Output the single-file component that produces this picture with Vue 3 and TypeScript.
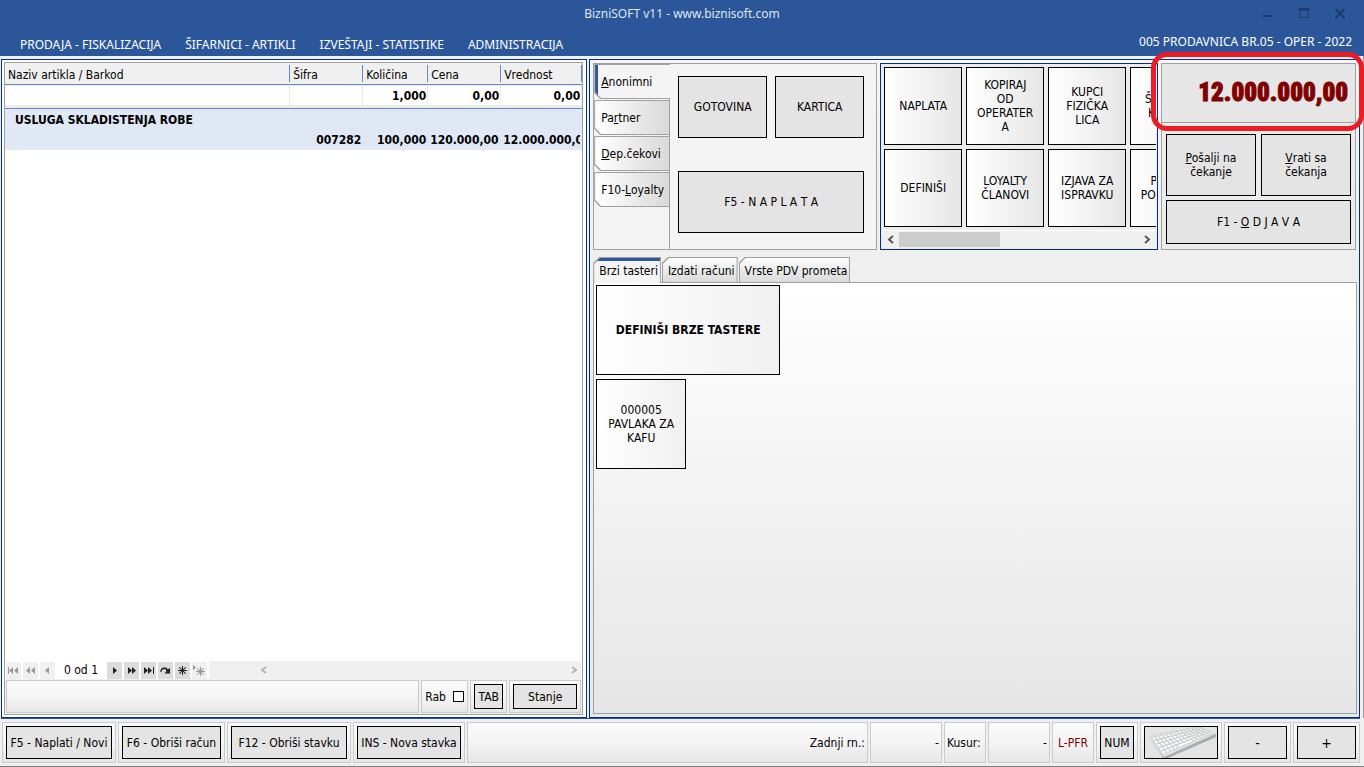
<script setup lang="ts">
import { computed, ref } from 'vue'

interface Stavka {
  naziv: string
  sifra: string
  kolicina: string
  cena: string
  vrednost: string
}

const meni = ['PRODAJA - FISKALIZACIJA', 'ŠIFARNICI - ARTIKLI', 'IZVEŠTAJI - STATISTIKE', 'ADMINISTRACIJA']

const stavke: Stavka[] = [
  { naziv: 'USLUGA SKLADISTENJA ROBE', sifra: '007282', kolicina: '100,000', cena: '120.000,00', vrednost: '12.000.000,00' },
]

const unos = ref({ naziv: '', sifra: '', kolicina: '1,000', cena: '0,00', vrednost: '0,00' })

const kupci = [
  { pre: '', key: 'A', post: 'nonimni' },
  { pre: 'Pa', key: 'r', post: 'tner' },
  { pre: '', key: 'D', post: 'ep.čekovi' },
  { pre: 'F10-', key: 'L', post: 'oyalty' },
]
const kupac = ref(0)

const funkcije = [
  ['NAPLATA'],
  ['KOPIRAJ', 'OD', 'OPERATER', 'A'],
  ['KUPCI', 'FIZIČKA', 'LICA'],
  ['ŠIFARNIK', 'KUPACA'],
  ['DEFINIŠI'],
  ['LOYALTY', 'ČLANOVI'],
  ['IZJAVA ZA', 'ISPRAVKU'],
  ['PREPIS', 'PODATAKA'],
]

const kartice = ['Brzi tasteri', 'Izdati računi', 'Vrste PDV prometa']
const kartica = ref(0)
const rabat = ref(false)

const navigacija = [
  { ime: 'Prvi', on: false, d: 'M2 4h1v7h-1z M7 4v7l-4-3.5z M12 4v7l-4-3.5z' },
  { ime: 'Strana nazad', on: false, d: 'M7 4v7l-4-3.5z M12 4v7l-4-3.5z' },
  { ime: 'Prethodni', on: false, d: 'M9 4v7l-4-3.5z' },
]
const navigacijaDesno = [
  { ime: 'Sledeći', on: true, d: 'M6 4v7l4-3.5z' },
  { ime: 'Strana napred', on: true, d: 'M4 4v7l4-3.5z M8 4v7l4-3.5z' },
  { ime: 'Poslednji', on: true, d: 'M3 4v7l4-3.5z M7 4v7l4-3.5z M12 4h1v7h-1z' },
  { ime: 'Osveži', on: true, d: 'M2 8.500L3 6l2-1.500h3L10 6.300 12 5v5.500H6.500L8.500 8 7.500 6.200H5.200L3.800 7.300 3.500 9z' },
  { ime: 'Novi', on: true, d: 'M7 3h1v3.300L10.300 4l.7.700L8.700 7H12v1H8.700L11 10.300l-.7.700L8 8.700V12H7V8.700L4.700 11l-.7-.7L6.300 8H3V7h3.300L4 4.700l.7-.7L7 6.300z' },
  { ime: 'Filter', on: false, d: 'M1 2v5l3-2.500z M8 4h1v3.300L11.300 5l.7.700L9.700 8H13v1H9.700L12 11.300l-.7.700L9 9.700V13H8V9.700L5.700 12l-.7-.7L7.300 9H4V8h3.300L5 5.700l.7-.7L8 7.300z' },
]

const komande = ['F5 - Naplati / Novi', 'F6 - Obriši račun', 'F12 - Obriši stavku', 'INS - Nova stavka']

// Keys are laid out on a skewed quadrilateral by bilinear interpolation.
const uglovi = { tl: [5, 10], tr: [54, 0], br: [69, 6], bl: [18, 29] }
function tacka(u: number, v: number): string {
  return [0, 1]
    .map((i) => {
      const gore = uglovi.tl[i] * (1 - u) + uglovi.tr[i] * u
      const dole = uglovi.bl[i] * (1 - u) + uglovi.br[i] * u
      return (gore * (1 - v) + dole * v).toFixed(2)
    })
    .join(',')
}
const dirke = computed(() => {
  const out: string[] = []
  for (let r = 0; r < 5; r++) {
    for (let c = 0; c < 13; c++) {
      if (r === 4 && c > 3 && c < 8) continue
      const u0 = (c + 0.3) / 13.3
      const u1 = u0 + 0.062
      const v0 = 0.04 + r * 0.185
      const v1 = v0 + 0.15
      out.push([tacka(u0, v0), tacka(u1, v0), tacka(u1, v1), tacka(u0, v1)].join(' '))
    }
  }
  out.push([tacka(0.33, 0.78), tacka(0.61, 0.78), tacka(0.61, 0.93), tacka(0.33, 0.93)].join(' '))
  return out
})
</script>

<template>
  <div class="app">
    <header class="top">
      <div class="titlebar">
        <h1>BizniSOFT v11 - www.biznisoft.com</h1>
        <div class="winbtns">
          <button type="button" aria-label="Umanji"><svg width="12" height="12"><path d="M1 8h9" stroke-width="2" /></svg></button>
          <button type="button" aria-label="Uvećaj"><svg width="12" height="12"><path d="M1.500 1v8.500h9V1" stroke-width="1" /><path d="M1 1.500h10" stroke-width="3" /></svg></button>
          <button type="button" aria-label="Zatvori"><svg width="12" height="12"><path d="M1.500 1l9 9M10.500 1l-9 9" stroke-width="2" /></svg></button>
        </div>
      </div>
      <div class="menubar">
        <nav>
          <a v-for="m in meni" :key="m" href="#">{{ m }}</a>
        </nav>
        <span class="user">005 PRODAVNICA BR.05 - OPER - 2022</span>
      </div>
    </header>

    <main class="work">
      <section class="frame left">
        <div class="grid-box">
          <table class="items">
            <colgroup>
              <col />
              <col class="c-sifra" />
              <col class="c-kol" />
              <col class="c-cena" />
              <col class="c-vred" />
            </colgroup>
            <thead>
              <tr class="head">
                <th>Naziv artikla / Barkod</th>
                <th>Šifra</th>
                <th>Količina</th>
                <th>Cena</th>
                <th>Vrednost</th>
              </tr>
              <tr class="entry">
                <td><input v-model="unos.naziv" aria-label="Naziv artikla / Barkod" /></td>
                <td><input v-model="unos.sifra" aria-label="Šifra" /></td>
                <td><input v-model="unos.kolicina" aria-label="Količina" /></td>
                <td><input v-model="unos.cena" aria-label="Cena" /></td>
                <td><input v-model="unos.vrednost" aria-label="Vrednost" /></td>
              </tr>
            </thead>
            <tbody v-for="s in stavke" :key="s.sifra">
              <tr class="name"><td colspan="5">{{ s.naziv }}</td></tr>
              <tr class="vals">
                <td></td>
                <td>{{ s.sifra }}</td>
                <td>{{ s.kolicina }}</td>
                <td class="cut">{{ s.cena }}</td>
                <td class="cut">{{ s.vrednost }}</td>
              </tr>
            </tbody>
          </table>
          <div class="blank"></div>
          <div class="navrow">
            <button v-for="n in navigacija" :key="n.ime" type="button" class="nav" :class="{ on: n.on }" :aria-label="n.ime">
              <svg width="15" height="15"><path :d="n.d" /></svg>
            </button>
            <span class="pos">0 od 1</span>
            <button v-for="n in navigacijaDesno" :key="n.ime" type="button" class="nav" :class="{ on: n.on }" :aria-label="n.ime">
              <svg width="15" height="15"><path :d="n.d" /></svg>
            </button>
            <div class="navgap"></div>
            <div class="hscroll">
              <svg width="8" height="8"><path d="M6 1L2 4l4 3" /></svg>
              <svg width="8" height="8"><path d="M2 1l4 3-4 3" /></svg>
            </div>
          </div>
          <div class="subbar">
            <div class="cell grow"></div>
            <div class="cell rab"><label for="rab">Rab</label><input id="rab" v-model="rabat" type="checkbox" /></div>
            <div class="cell"><button type="button" class="btn tab-btn">TAB</button></div>
            <div class="cell"><button type="button" class="btn stanje">Stanje</button></div>
          </div>
        </div>
      </section>

      <section class="frame right">
        <div class="upper">
          <div class="pay">
            <div class="vtabs">
              <button v-for="(k, i) in kupci" :key="k.post" type="button" class="vtab" :class="{ active: kupac === i }" @click="kupac = i">
                <span>{{ k.pre }}<u>{{ k.key }}</u>{{ k.post }}</span>
              </button>
            </div>
            <div class="paybtns">
              <button type="button" class="btn">GOTOVINA</button>
              <button type="button" class="btn">KARTICA</button>
              <button type="button" class="btn wide">F5 - N A P L A T A</button>
            </div>
          </div>

          <div class="funcs">
            <div class="fgrid">
              <button v-for="f in funkcije" :key="f[0]" type="button" class="btn tile">
                <span v-for="r in f" :key="r">{{ r }}</span>
              </button>
            </div>
            <div class="scroll">
              <svg width="8" height="9"><path d="M6 1L2 4.500 6 8" /></svg>
              <div class="track"><div class="thumb"></div></div>
              <svg width="8" height="9"><path d="M2 1l4 3.500L2 8" /></svg>
            </div>
          </div>

          <div class="summary">
            <div class="total">
              <output>12.000.000,00</output>
              <div class="marker"></div>
            </div>
            <div class="hold">
              <button type="button" class="btn"><span><u>P</u>ošalji na<br />čekanje</span></button>
              <button type="button" class="btn"><span><u>V</u>rati sa<br />čekanja</span></button>
              <button type="button" class="btn logout"><span>F1 - <u>O</u> D J A V A</span></button>
            </div>
          </div>
        </div>

        <div class="htabs">
          <button v-for="(k, i) in kartice" :key="k" type="button" class="htab" :class="{ active: kartica === i }" @click="kartica = i">
            <span>{{ k }}</span>
          </button>
        </div>
        <div class="quick">
          <button type="button" class="btn soft define">DEFINIŠI BRZE TASTERE</button>
          <button type="button" class="btn soft item"><span>000005</span><span>PAVLAKA ZA</span><span>KAFU</span></button>
        </div>
      </section>
    </main>

    <footer class="bottom">
      <div v-for="(k, i) in komande" :key="k" class="cell" :class="'k' + i"><button type="button" class="btn">{{ k }}</button></div>
      <div class="cell grow end">Zadnji rn.:</div>
      <div class="cell end w72">-</div>
      <div class="cell w42 kusur">Kusur:</div>
      <div class="cell end w62">-</div>
      <div class="cell lpfr w42">L-PFR</div>
      <div class="cell w42"><button type="button" class="btn">NUM</button></div>
      <div class="cell w82">
        <button type="button" class="btn kb" aria-label="Tastatura">
          <svg width="72" height="31" viewBox="0 0 72 31">
            <polygon points="8,15 18,31 23,31 71,10 71,7" fill="#7f8585" opacity="0.6" />
            <polygon points="3,9 17,29 19,31 70,8 70,6 55,0 50,0" fill="#adb4b5" />
            <polygon points="3,9 17,28 19,30 70,7 69,5 54,0 50,0" fill="#dde1e2" />
            <polygon v-for="d in dirke" :key="d" :points="d" fill="#ffffff" stroke="#a3abac" stroke-width="0.4" />
          </svg>
        </button>
      </div>
      <div class="cell w67"><button type="button" class="btn sign">-</button></div>
      <div class="cell w67"><button type="button" class="btn sign">+</button></div>
    </footer>
  </div>
</template>

<style>
body {
  margin: 0;
  overflow: hidden;
}
</style>

<style scoped>
.app,
.app * {
  box-sizing: border-box;
}
.app {
  height: 100vh;
  display: flex;
  flex-direction: column;
  background: #f0f0f0;
  border-bottom: 1px solid #808080;
  font-family: "DejaVu Sans Condensed", "Noto Sans", sans-serif;
  font-size: 12px;
  line-height: 14px;
  color: #000;
}
button,
input {
  font: inherit;
  color: inherit;
  margin: 0;
}
button {
  padding: 0;
  border: 0;
  background: none;
}

/* header */
.top {
  height: 56px;
  flex: none;
  background: #2b579a;
  color: #fff;
  font-family: "Noto Sans", sans-serif;
}
.titlebar {
  position: relative;
  height: 28px;
  display: flex;
  align-items: center;
  justify-content: center;
}
h1 {
  margin: 0;
  font-size: 12px;
  font-weight: 400;
  color: #dfe6f1;
}
.winbtns {
  position: absolute;
  right: 18px;
  top: 8px;
  display: flex;
  gap: 24px;
}
.winbtns button {
  height: 12px;
  display: flex;
}
.winbtns path {
  fill: none;
  stroke: #1c3c6c;
}
.menubar {
  height: 28px;
  padding: 0 12px 0 20px;
  display: flex;
  align-items: center;
  justify-content: space-between;
}
.menubar nav {
  display: flex;
  gap: 24px;
  padding-top: 5px;
}
.menubar a {
  color: #fff;
  text-decoration: none;
}

/* frames */
.work {
  flex: 1;
  min-height: 0;
  padding: 3px 3px 0 1px;
  display: grid;
  grid-template-columns: 432fr 568fr;
  gap: 2px;
  border-right: 1px solid #9a9a9a;
}
.frame {
  min-width: 0;
  border: 1px solid #00308c;
  display: flex;
  flex-direction: column;
}
.left {
  padding: 2px 3px 2px 2px;
  background: #fff;
}
.grid-box {
  flex: 1;
  border: 1px solid #a0a0a0;
  display: flex;
  flex-direction: column;
  background: #fff;
}

/* items table */
.items {
  width: 100%;
  table-layout: fixed;
  border-collapse: separate;
  border-spacing: 0;
}
.items th,
.items td {
  padding: 0;
  overflow: hidden;
  white-space: nowrap;
}
.c-sifra {
  width: 73px;
}
.c-kol {
  width: 65px;
}
.c-cena {
  width: 73px;
}
.c-vred {
  width: 81px;
}
.items .head th {
  height: 22px;
  padding: 2px 3px 0;
  font-weight: 400;
  text-align: left;
  background: linear-gradient(#5f8acb, #5f8acb) right center / 1px 17px no-repeat #f0f0f0;
  border-bottom: 1px solid #5f8acb;
}
.items .entry td {
  height: 24px;
  padding: 1px 1px 3px 0;
  background: #ececec;
  border-bottom: 1px solid #5f8acb;
}
.entry input {
  display: block;
  width: 100%;
  height: 19px;
  border: 0;
  padding: 1px 1px 0 0;
  background: #fff;
  font-weight: 700;
  text-align: right;
}
tbody {
  background: #e0e8f6;
  font-weight: 700;
}
.items .name td {
  height: 21px;
  padding: 0 10px;
}
.items .vals td {
  height: 20px;
  padding: 0 2px 0 0;
  text-align: right;
}
.items .vals td.cut {
  text-align: left;
  padding: 0;
  border-left: 2px solid #e0e8f6;
  border-right: 2px solid #e0e8f6;
}
.blank {
  flex: 1;
}
.navrow {
  height: 18px;
  padding: 0 1px;
  display: flex;
  align-items: center;
  gap: 2px;
}
.nav {
  width: 15px;
  height: 17px;
  display: flex;
  align-items: center;
  background: #f0f0f0;
}
.nav.on {
  background: #dcdcdc;
}
.nav path {
  fill: #999;
}
.nav.on path {
  fill: #222;
}
.pos {
  width: 48px;
  text-align: center;
}
.navgap {
  width: 50px;
  align-self: stretch;
  background: #efefef;
}
.hscroll {
  flex: 1;
  align-self: stretch;
  padding: 0 3px 0 1px;
  display: flex;
  align-items: center;
  justify-content: space-between;
  background: #f0f0f0;
}
.navgap + .hscroll {
  margin-left: -2px;
}
.hscroll path {
  fill: none;
  stroke: #b4b4b4;
  stroke-width: 2;
}
.subbar {
  height: 35px;
  flex: none;
  padding: 1px;
  display: flex;
  gap: 2px;
  background: #f0f0f0;
}
.cell {
  border: 1px solid #cbcbcb;
  background: linear-gradient(#fafafa, #f4f4f4 50%, #e6e6e6);
  display: flex;
  align-items: center;
  padding: 3px;
}
.grow {
  flex: 1;
}
.rab {
  width: 47px;
  padding: 0 3px;
  justify-content: space-between;
}
.rab input {
  appearance: none;
  width: 11px;
  height: 11px;
  border: 1px solid #000;
  background: #fff;
}
.btn {
  display: flex;
  flex-direction: column;
  align-items: center;
  justify-content: center;
  border: 1px solid #000;
  background: #e4e4e4;
  text-align: center;
  white-space: nowrap;
}
.tab-btn {
  width: 29px;
  height: 25px;
}
.stanje {
  width: 64px;
  height: 25px;
}

/* right pane */
.right {
  padding: 3px 2px 3px 3px;
  background: linear-gradient(#f6f6f6, #efefef 200px, #e8e8e8);
}
.upper {
  height: 187px;
  flex: none;
  display: flex;
}
.pay {
  width: 284px;
  flex: none;
  display: flex;
  border: 1px solid #a0a0a0;
  background: #f4f4f4;
}
.vtabs {
  width: 76px;
  flex: none;
  border-right: 1px solid #a0a0a0;
  display: flex;
  flex-direction: column;
  gap: 1px;
}
.vtab {
  position: relative;
  width: 76px;
  height: 35px;
  padding: 0 0 0 7px;
  text-align: left;
  white-space: nowrap;
  background: #a0a0a0;
  clip-path: polygon(0 0, 100% 0, 100% 100%, 6px 100%, 0 calc(100% - 6px));
}
.vtab::before {
  content: "";
  position: absolute;
  inset: 1px;
  background: linear-gradient(90deg, #fff, #d9d9d9);
  clip-path: polygon(0 0, 100% 0, 100% 100%, 6px 100%, 0 calc(100% - 6px));
}
.vtab.active::before {
  right: 0;
  background: linear-gradient(90deg, #2b579a 3px, #f4f4f4 3px);
}
.vtab span,
.htab span {
  position: relative;
}
.paybtns {
  flex: 1;
  padding: 12px 12px 0 8px;
  display: grid;
  grid-template-columns: 1fr 1fr;
  grid-template-rows: 62px 62px;
  gap: 33px 8px;
}
.wide {
  grid-column: span 2;
}
.funcs {
  flex: 1;
  min-width: 0;
  margin-left: 3px;
  border: 1px solid #00308c;
  background: #ececec;
  display: flex;
  flex-direction: column;
}
.fgrid {
  flex: 1;
  overflow: hidden;
  padding: 3px 0 0 3px;
  margin-right: 1px;
  display: grid;
  grid-template-columns: repeat(4, 78px);
  grid-template-rows: 78px 78px;
  gap: 4px;
}
.tile {
  background: linear-gradient(90deg, #fff, #e6e6e6);
}
.scroll {
  height: 18px;
  margin: 0 1px 1px;
  padding: 0 5px;
  display: flex;
  align-items: center;
  gap: 4px;
  background: #f0f0f0;
  border-top: 1px solid #fff;
}
.scroll path {
  fill: none;
  stroke: #555;
  stroke-width: 2;
}
.track {
  flex: 1;
}
.thumb {
  width: 42%;
  height: 15px;
  background: #cdcdcd;
}
.summary {
  width: 195px;
  flex: none;
  margin: 0 1px 0 3px;
  border: 1px solid #a0a0a0;
  background: #ececec;
  display: flex;
  flex-direction: column;
}
.total {
  position: relative;
  height: 60px;
  flex: none;
  margin: -1px -1px 0;
  border: 1px solid #a0a0a0;
  background: #e6e6e6;
  display: flex;
  align-items: center;
  justify-content: flex-end;
  padding-right: 7px;
}
.total output {
  font-family: "Roboto Condensed", "Open Sans Condensed", "Noto Sans Condensed", Roboto, sans-serif;
  font-weight: 900;
  font-size: 25px;
  line-height: 32px;
  color: #800000;
  -webkit-text-stroke: 1px #800000;
}
.marker {
  position: absolute;
  z-index: 2;
  inset: -12px -9px -9px -11px;
  border: 5px solid #ed1c24;
  border-radius: 16px;
  pointer-events: none;
}
.hold {
  padding: 11px 4px 5px;
  flex: 1;
  display: grid;
  grid-template-columns: 1fr 1fr;
  grid-template-rows: 62px 1fr;
  gap: 4px 5px;
}
.logout {
  grid-column: span 2;
}
.htabs {
  margin-top: 7px;
  height: 25px;
  flex: none;
  display: flex;
  gap: 1px;
}
.htab {
  position: relative;
  height: 26px;
  padding: 2px 3px 0 6px;
  background: #a0a0a0;
  white-space: nowrap;
  clip-path: polygon(6px 0, 100% 0, 100% 100%, 0 100%, 0 6px);
}
.htab::before {
  content: "";
  position: absolute;
  inset: 1px;
  background: linear-gradient(#fdfdfd, #dadada);
  clip-path: polygon(6px 0, 100% 0, 100% 100%, 0 100%, 0 6px);
}
.htab.active {
  z-index: 1;
}
.htab.active::before {
  bottom: 0;
  background: linear-gradient(#2b579a 3px, #f4f4f4 3px);
}
.quick {
  flex: 1;
  border: 1px solid #a0a0a0;
  background: linear-gradient(#fff, #e6e6e6);
  padding: 2px;
  display: flex;
  flex-direction: column;
  gap: 4px;
}
.soft {
  background: linear-gradient(90deg, #fff, #f0f0f0);
}
.define {
  width: 184px;
  height: 90px;
  font-weight: 700;
}
.item {
  width: 90px;
  height: 90px;
}

/* bottom bar */
.bottom {
  height: 48px;
  flex: none;
  margin: 0 4px 0 1px;
  padding: 3px 0 3px 1px;
  border-top: 1px solid #2b579a;
  display: flex;
  gap: 2px;
}
.bottom .btn {
  width: 100%;
  height: 100%;
}
.bottom .sign {
  font-size: 14px;
}
.k0 {
  width: 114px;
}
.k1 {
  width: 107px;
}
.k2 {
  width: 124px;
}
.k3 {
  width: 112px;
}
.end {
  justify-content: flex-end;
  padding: 0 2px;
}
.w42 {
  width: 42px;
}
.w62 {
  width: 62px;
}
.w67 {
  width: 67px;
}
.w72 {
  width: 72px;
}
.w82 {
  width: 82px;
}
.kusur {
  padding: 0 2px;
}
.lpfr {
  justify-content: center;
  color: #800000;
}
</style>
